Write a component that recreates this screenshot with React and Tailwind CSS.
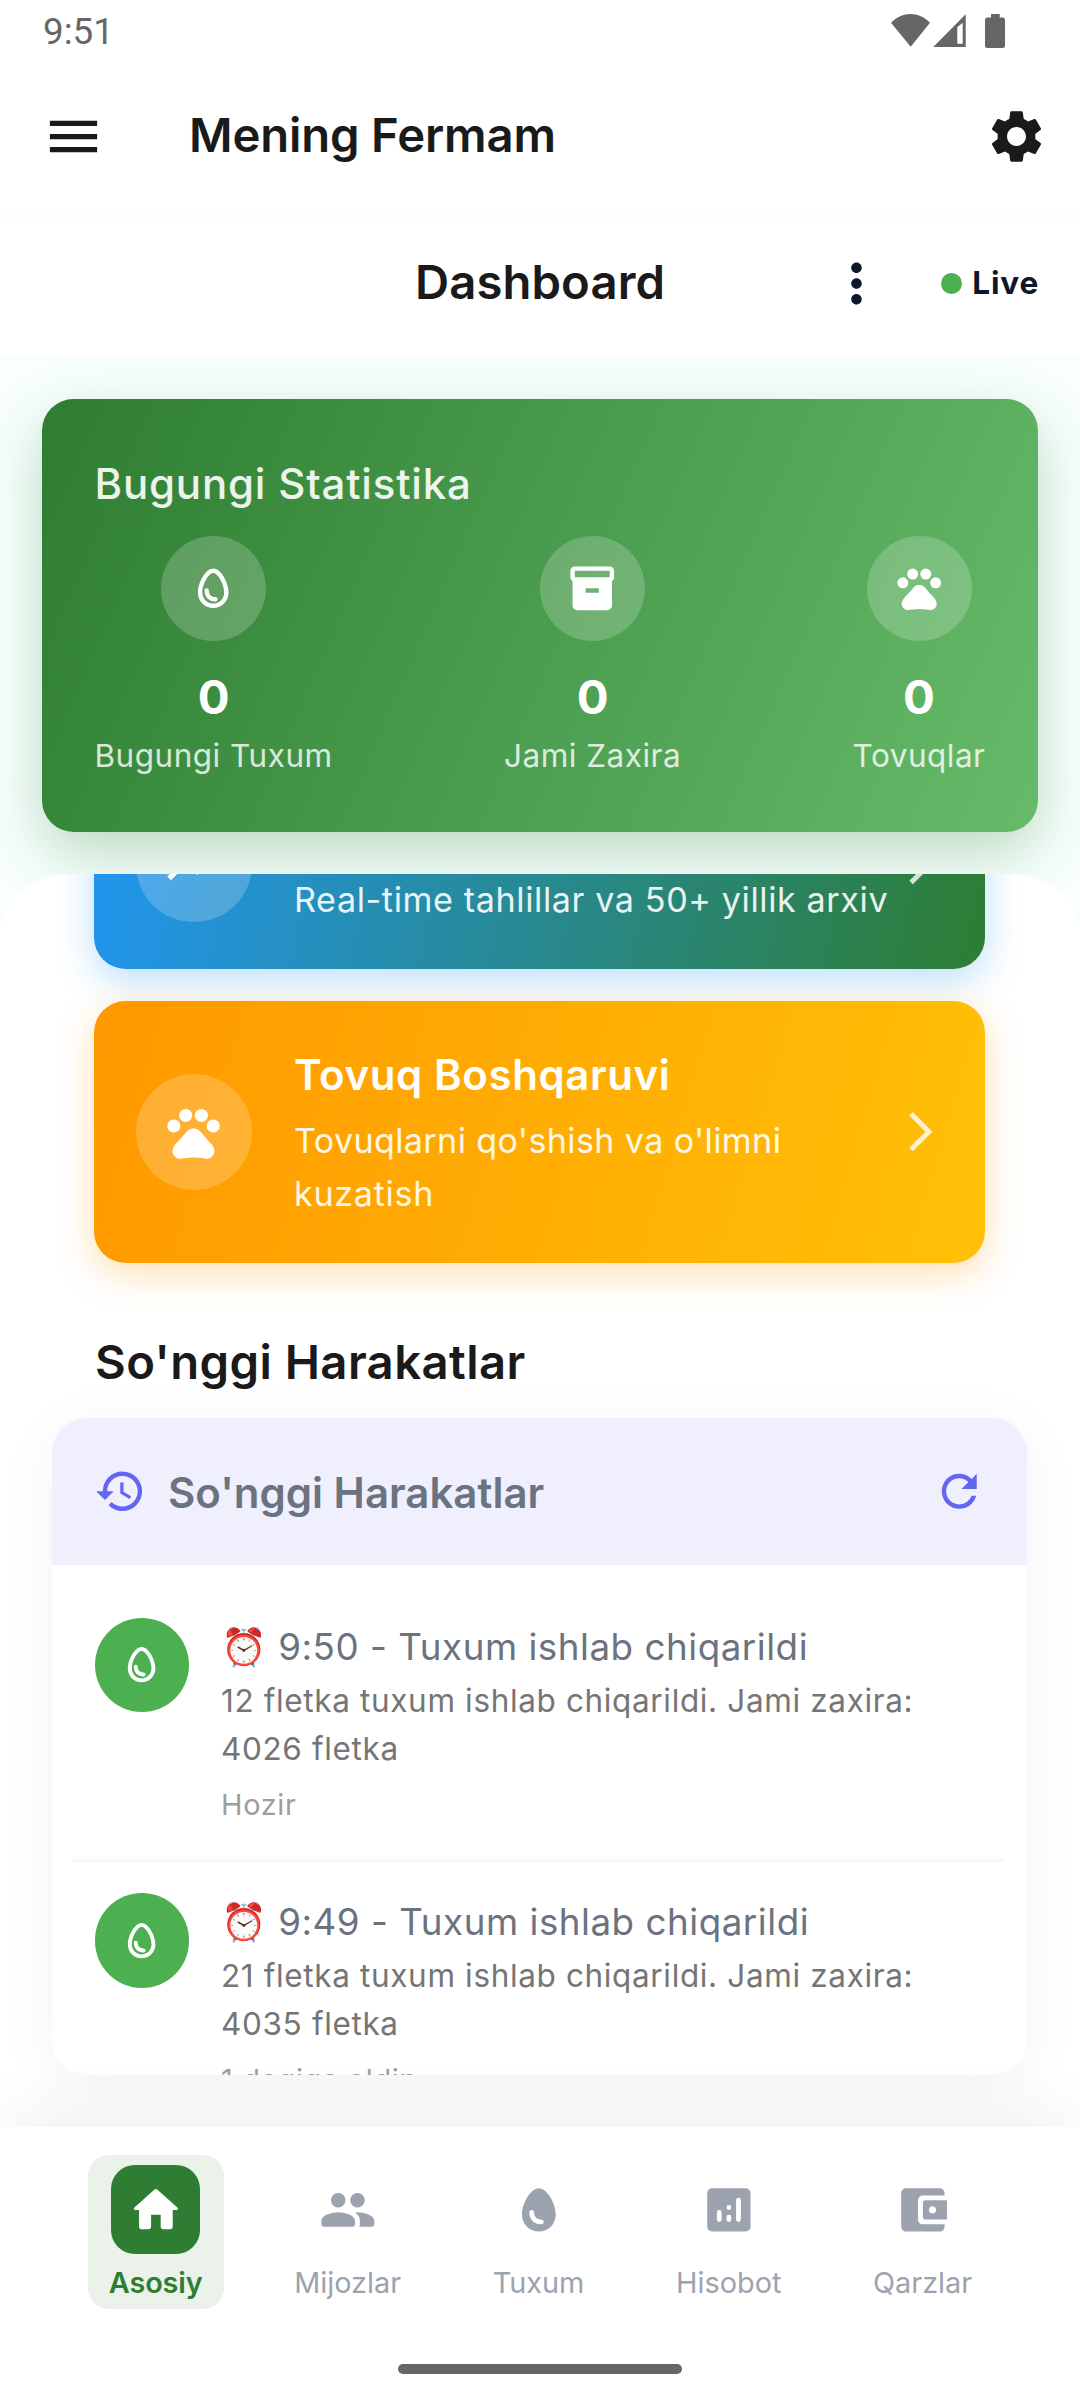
import React from "react";
import {
  MdMenu, MdSettings, MdMoreVert, MdOutlineEgg, MdEgg, MdInventory2, MdPets,
  MdTrendingUp, MdArrowForwardIos, MdHistory, MdRefresh,
} from "react-icons/md";

function StatusBar() {
  return (
    <div className="flex h-[63px] shrink-0 items-center justify-between pl-[43px] pr-[75px] text-[#666666]">
      <span className="font-['Roboto'] text-[36.75px] leading-[43px]">9:51</span>
      <svg width="116" height="36" viewBox="0 0 116 36" className="mt-[13px] self-start" fill="currentColor">
        <path d="M21.700 33.700 L2 9.700 C13 -1.900 30 -1.900 41 9.700 Z" />
        <path fillRule="evenodd" d="M76.700 1.200 V34 H44.200 Z M73.700 9.700 L68.300 14.200 V30.700 H73.700 Z" />
        <path d="M102 1h8.700v3.500h2.800a2.500 2.500 0 0 1 2.500 2.500v25.500a2.500 2.500 0 0 1-2.500 2.500h-15a2.500 2.500 0 0 1-2.500-2.500v-25.500a2.500 2.500 0 0 1 2.500-2.500h3.500z" />
      </svg>
    </div>
  );
}

function Stat({ icon: Icon, label }) {
  return (
    <div className="flex flex-col items-center">
      <div className="flex size-[105px] items-center justify-center rounded-full bg-white/20 text-white">
        <Icon size={52.5} />
      </div>
      <div className="mt-[30px] text-[47.25px] font-bold leading-[52px] text-white">0</div>
      <div className="mt-[8px] text-[31.5px] leading-[50px] tracking-[0.5px] text-white/80">{label}</div>
    </div>
  );
}

function ActionCard({ className, icon: Icon, title, children }) {
  return (
    <div className={"flex shrink-0 items-center rounded-[31.5px] px-[42px] " + className}>
      <div className="flex size-[115.5px] shrink-0 items-center justify-center rounded-full bg-white/20 text-white">
        <Icon size={63} />
      </div>
      <div className="ml-[42.5px] flex-1 pt-[5px]">
        <div className="h-[52px] text-[42px] font-semibold leading-[52px] tracking-[0.6px] text-white">{title}</div>
        <div className="mt-[13px] whitespace-nowrap text-[34.125px] leading-[53px] text-white/90">{children}</div>
      </div>
      <MdArrowForwardIos size={47.25} className="mr-[-1px] shrink-0 text-white/80" />
    </div>
  );
}

function Activity({ time, detail, total, ago }) {
  return (
    <div className="flex h-[273px] shrink-0 px-[21.5px] pt-[31.5px]">
      <div className="flex size-[94.5px] shrink-0 items-center justify-center rounded-full bg-[#4caf50] text-white">
        <MdOutlineEgg size={47.25} />
      </div>
      <div className="ml-[32px] whitespace-nowrap pt-[1px]">
        <div className="h-[56px] text-[36.75px] leading-[56px] tracking-[0.52px] text-[#6b7280]">
          <span className="font-['Noto_Color_Emoji']">⏰</span> {time} - Tuxum ishlab chiqarildi
        </div>
        <div className="mt-[2px] text-[31.5px] leading-[48.3px] tracking-[0.64px] text-[#757575]">
          {detail}<br />{total}
        </div>
        <div className="mt-[10.5px] text-[28.875px] leading-[42px] tracking-[0.7px] text-[#9e9e9e]">{ago}</div>
      </div>
    </div>
  );
}

const HomeIcon = (
  <path d="M10 19v-5h4v5c0 .55.45 1 1 1h3c.55 0 1-.45 1-1v-7h1.700c.46 0 .68-.57.33-.87L12.670 3.600c-.38-.34-.96-.34-1.340 0l-8.360 7.530c-.34.3-.13.87.33.87H5v7c0 .55.45 1 1 1h3c.55 0 1-.45 1-1z" />
);
const GroupIcon = (
  <path d="M16 11c1.660 0 2.990-1.340 2.990-3S17.660 5 16 5s-3 1.340-3 3 1.340 3 3 3zm-8 0c1.660 0 2.990-1.340 2.990-3S9.660 5 8 5 5 6.340 5 8s1.340 3 3 3zm0 2c-2.330 0-7 1.170-7 3.500V18c0 .55.45 1 1 1h12c.55 0 1-.45 1-1v-1.500c0-2.330-4.670-3.500-7-3.500zm8 0c-.29 0-.62.02-.97.05.02.01.03.03.04.04 1.140.83 1.930 1.940 1.930 3.410V18c0 .35-.07.69-.18 1H22c.55 0 1-.45 1-1v-1.500c0-2.330-4.670-3.500-7-3.500z" />
);
const AnalyticsIcon = (
  <path fillRule="evenodd" d="M19 3H5a2 2 0 0 0-2 2v14a2 2 0 0 0 2 2h14a2 2 0 0 0 2-2V5a2 2 0 0 0-2-2zM8 17a1 1 0 0 1-1-1v-3a1 1 0 0 1 2 0v3a1 1 0 0 1-1 1zm4 0a1 1 0 0 1-1-1v-1a1 1 0 0 1 2 0v1a1 1 0 0 1-1 1zm0-5a1 1 0 1 1 0-2 1 1 0 0 1 0 2zm4 5a1 1 0 0 1-1-1V8a1 1 0 0 1 2 0v8a1 1 0 0 1-1 1z" />
);
const WalletIcon = (
  <path d="M10 16V8c0-1.100.89-2 2-2h9V5c0-1.100-.9-2-2-2H5c-1.110 0-2 .9-2 2v14c0 1.100.89 2 2 2h14c1.100 0 2-.9 2-2v-1h-9c-1.110 0-2-.9-2-2zm3-8c-.55 0-1 .45-1 1v6c0 .55.45 1 1 1h9V8h-9zm3 5.500c-.83 0-1.500-.67-1.500-1.500s.67-1.500 1.500-1.500 1.500.67 1.500 1.500-.67 1.500-1.500 1.500z" />
);

function NavItem({ icon, label, active }) {
  return (
    <div className={"flex h-[154px] flex-col items-center rounded-[21px] px-[21px] pt-[10px] " + (active ? "bg-[#eaf2ea] text-[#2e7d32]" : "text-[#9ca3af]")}>
      <div className={"flex size-[89.25px] items-center justify-center rounded-[24px] " + (active ? "bg-[#2e7d32] text-white" : "")}>
        {icon}
      </div>
      <div className={"mt-[10px] text-[28.875px] leading-[38px] " + (active ? "font-semibold tracking-[-0.15px]" : "")}>{label}</div>
    </div>
  );
}

function NavSvg({ children }) {
  return <svg width="57.75" height="57.75" viewBox="0 0 24 24" fill="currentColor">{children}</svg>;
}

export default function App() {
  return (
    <div className="flex h-[2400px] w-[1080px] flex-col overflow-hidden bg-white font-['Inter',sans-serif]">
      <div className="relative z-20 h-[210px] shrink-0 bg-white shadow-[0_5px_10px_rgba(0,0,0,0.02)]">
        <StatusBar />
        <header className="flex h-[147px] items-center pl-[42px] pr-[32px] text-[#1a1a1a]">
          <MdMenu size={63} />
          <h1 className="ml-[84px] flex-1 pb-[4px] text-[47.25px] font-semibold leading-[60px] tracking-[-0.15px]">Mening Fermam</h1>
          <MdSettings size={63} />
        </header>
      </div>

      <div className="relative z-10 grid h-[147px] shrink-0 grid-cols-[1fr_auto_1fr] items-center bg-white px-[42px] shadow-[0_2px_6px_rgba(0,0,0,0.025)]">
        <span />
        <h2 className="pb-[4px] text-[47.25px] font-semibold leading-[60px] tracking-[0.1px] text-[#1a1a1a]">Dashboard</h2>
        <div className="flex items-center justify-end text-[#0f172a]">
          <MdMoreVert size={63} />
          <span className="ml-[52.5px] size-[21px] rounded-full bg-[#4caf50]" />
          <span className="ml-[10.5px] mr-[-1px] pb-[2px] text-[31.5px] font-bold leading-[40px] tracking-[0.8px]">Live</span>
        </div>
      </div>

      <main className="flex h-[1770px] shrink-0 flex-col overflow-hidden bg-[#f8fffe]">
        <section className="mx-[42px] mt-[42px] h-[433px] shrink-0 rounded-[31.5px] bg-[linear-gradient(113.5deg,#2e7d32,#66bb6a)] px-[52.5px] pt-[52.5px] shadow-[0_21px_61px_rgba(46,125,50,0.3)]">
          <h3 className="text-[42px] font-medium leading-[64px] tracking-[0.82px] text-white/90">Bugungi Statistika</h3>
          <div className="mt-[20px] flex justify-between">
            <Stat icon={MdOutlineEgg} label="Bugungi Tuxum" />
            <Stat icon={MdInventory2} label="Jami Zaxira" />
            <Stat icon={MdPets} label="Tovuqlar" />
          </div>
        </section>

        <section className="mt-[42px] flex h-[1253px] shrink-0 flex-col overflow-hidden rounded-t-[66px] bg-white">
          <div className="ml-[94px] mt-[-114.500px] flex w-[891px] shrink-0 flex-col gap-[32px]">
            <ActionCard
              icon={MdTrendingUp}
              className="h-[209.5px] bg-[linear-gradient(103.2deg,#2196f3,#2e7d32)] shadow-[0_10.5px_37px_rgba(33,150,243,0.3)]"
            >
              <span className="tracking-[0.62px]">Real-time tahlillar va 50+ yillik arxiv</span>
            </ActionCard>
            <ActionCard
              icon={MdPets}
              title="Tovuq Boshqaruvi"
              className="h-[262px] bg-[linear-gradient(106.4deg,#ff9800,#ffc107)] shadow-[0_10.5px_37px_rgba(255,152,0,0.3)]"
            >
              <span className="tracking-[0.37px]">Tovuqlarni qo'shish va o'limni</span><br />
              <span className="tracking-[0.7px]">kuzatish</span>
            </ActionCard>
          </div>

          <h3 className="ml-[95px] mt-[69px] shrink-0 text-[47.25px] font-semibold leading-[60px] tracking-[0.42px] text-[#1a1a1a]">So'nggi Harakatlar</h3>

          <div className="ml-[52px] mt-[26px] h-[657px] w-[975px] shrink-0 rounded-[35px] bg-white shadow-[0_10.5px_61px_rgba(0,0,0,0.05)]">
            <div className="flex h-full flex-col overflow-hidden rounded-[35px]">
              <div className="flex h-[147px] shrink-0 items-center bg-[#f0effe] px-[42px] text-[#6366f1]">
                <MdHistory size={52.5} />
                <h4 className="ml-[21.5px] flex-1 pt-[3px] text-[42px] font-semibold leading-[56px] text-[#6b7280]">So'nggi Harakatlar</h4>
                <MdRefresh size={52.5} />
              </div>
              <div className="flex flex-col px-[21px] pt-[21px]">
                <Activity time="9:50" detail="12 fletka tuxum ishlab chiqarildi. Jami zaxira:" total="4026 fletka" ago="Hozir" />
                <div className="h-[2.625px] shrink-0 bg-[#f6f7f9]" />
                <Activity time="9:49" detail="21 fletka tuxum ishlab chiqarildi. Jami zaxira:" total="4035 fletka" ago="1 daqiqa oldin" />
              </div>
            </div>
          </div>
        </section>
      </main>

      <nav className="relative z-10 flex h-[273px] shrink-0 flex-col items-center bg-white pt-[28px] shadow-[0_-13px_61px_rgba(0,0,0,0.06)]">
        <div className="flex w-full justify-around pl-[63px] pr-[62px]">
          <NavItem active label="Asosiy" icon={<NavSvg>{HomeIcon}</NavSvg>} />
          <NavItem label="Mijozlar" icon={<NavSvg>{GroupIcon}</NavSvg>} />
          <NavItem label="Tuxum" icon={<MdEgg size={57.75} />} />
          <NavItem label="Hisobot" icon={<NavSvg>{AnalyticsIcon}</NavSvg>} />
          <NavItem label="Qarzlar" icon={<NavSvg>{WalletIcon}</NavSvg>} />
        </div>
        <div className="mt-[55px] h-[10px] w-[284px] rounded-full bg-[#666666]" />
      </nav>
    </div>
  );
}
